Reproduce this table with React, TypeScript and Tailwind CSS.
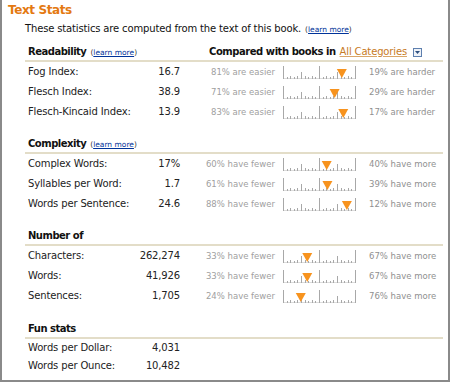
import React from "react";

type Row = { label: string; value: string; pct?: number; left?: string; right?: string };

const readability: Row[] = [
  { label: "Fog Index:", value: "16.7", pct: 81, left: "81% are easier", right: "19% are harder" },
  { label: "Flesch Index:", value: "38.9", pct: 71, left: "71% are easier", right: "29% are harder" },
  { label: "Flesch-Kincaid Index:", value: "13.9", pct: 83, left: "83% are easier", right: "17% are harder" },
];

const complexity: Row[] = [
  { label: "Complex Words:", value: "17%", pct: 60, left: "60% have fewer", right: "40% have more" },
  { label: "Syllables per Word:", value: "1.7", pct: 61, left: "61% have fewer", right: "39% have more" },
  { label: "Words per Sentence:", value: "24.6", pct: 88, left: "88% have fewer", right: "12% have more" },
];

const numberOf: Row[] = [
  { label: "Characters:", value: "262,274", pct: 33, left: "33% have fewer", right: "67% have more" },
  { label: "Words:", value: "41,926", pct: 33, left: "33% have fewer", right: "67% have more" },
  { label: "Sentences:", value: "1,705", pct: 24, left: "24% have fewer", right: "76% have more" },
];

const funStats: Row[] = [
  { label: "Words per Dollar:", value: "4,031" },
  { label: "Words per Ounce:", value: "10,482" },
];

// 72px ruler, tick every 5%, orange marker at the percentile
function Ruler({ pct }: { pct: number }) {
  const w = 72;
  const ticks = Array.from({ length: 21 }, (_, i) => i);
  const mx = (pct / 100) * w + 0.5;
  return (
    <svg width={w + 1} height={15} viewBox={`0 0 ${w + 1} 15`} className="overflow-visible">
      <line x1={0.5} y1={13.5} x2={w + 0.5} y2={13.5} stroke="#b8b8b8" strokeWidth={1} strokeDasharray="1 1" />
      {ticks.map((i) => {
        const x = Math.round(i * 3.6) + 0.5;
        const h = i % 10 === 0 ? 13 : i % 5 === 0 ? 7 : i % 2 === 0 ? 3 : 2;
        return <line key={i} x1={x} y1={14 - h} x2={x} y2={14} stroke="#a8a8a8" strokeWidth={1} />;
      })}
      <polygon points={`${mx - 5},4 ${mx + 5},4 ${mx},13`} fill="#f7931e" />
    </svg>
  );
}

function LearnMore() {
  return (
    <span className="ml-[4px] text-[7.5px] font-normal tracking-normal text-[#333]">
      (<span className="text-[#003399] underline">learn more</span>)
    </span>
  );
}

function StatRow({ row, h = "h-5" }: { row: Row; h?: string }) {
  return (
    <div className={`flex items-center ${h} pl-[3px] whitespace-nowrap`}>
      <div className="flex w-[152px] justify-between text-[#222]">
        <span>{row.label}</span>
        <span>{row.value}</span>
      </div>
      {row.pct !== undefined && (
        <>
          <span className="w-[95px] text-right text-[8.5px] tracking-normal text-[#a0a0a0]">{row.left}</span>
          <span className="ml-[8px] flex">
            <Ruler pct={row.pct} />
          </span>
          <span className="ml-[13px] text-[8.5px] tracking-normal text-[#909090]">{row.right}</span>
        </>
      )}
    </div>
  );
}

function Section({
  title,
  learn,
  rows,
  compare,
  rowH,
  className = "",
}: {
  title: string;
  learn?: boolean;
  rows: Row[];
  compare?: boolean;
  rowH?: string;
  className?: string;
}) {
  return (
    <div className={className}>
      <div className="box-content flex h-[16px] items-center border-b-2 border-[#e3ddc8] pl-[3px] whitespace-nowrap">
        <div className="w-[181px] font-bold tracking-[-0.5px] text-[#111]">
          {title}
          {learn && <LearnMore />}
        </div>
        {compare && (
          <div className="flex items-center font-bold tracking-[-0.45px] text-[#111]">
            Compared with books in
            <span className="ml-[4px] font-normal tracking-[-0.15px] text-[#c77a24] underline decoration-[#d9a66a]">
              All Categories
            </span>
            <span className="ml-[6px] flex h-[9px] w-[9px] items-center justify-center border border-[#5d7fae] bg-[#eef2f8]">
              <svg width="5" height="3" viewBox="0 0 5 3">
                <polygon points="0,0 5,0 2.5,3" fill="#2d4f80" />
              </svg>
            </span>
          </div>
        )}
      </div>
      {rows.map((r) => (
        <StatRow key={r.label} row={r} h={rowH} />
      ))}
    </div>
  );
}

export default function App() {
  return (
    <div className="h-[383px] w-[450px] overflow-hidden bg-white">
      <div className="h-[382px] border-x-2 border-b-2 border-[#8a8a8a] pt-[2px] pr-[5px] font-['DejaVu_Sans',sans-serif] text-[10px] leading-[14px] tracking-[-0.15px]">
        <div className="pl-[6px] text-[12px] font-bold leading-[16px] tracking-[-0.4px] text-[#e47911]">Text Stats</div>
        <div className="mt-[4px] pl-[23px] text-[#111]">
          These statistics are computed from the text of this book.
          <LearnMore />
        </div>
        <div className="ml-[23px]">
          <Section className="mt-[7px]" title="Readability" learn compare rows={readability} />
          <Section className="mt-[14px]" title="Complexity" learn rows={complexity} />
          <Section className="mt-[14px]" title="Number of" rows={numberOf} />
          <Section className="mt-[15px]" title="Fun stats" rows={funStats} rowH="h-[18px]" />
        </div>
      </div>
    </div>
  );
}
